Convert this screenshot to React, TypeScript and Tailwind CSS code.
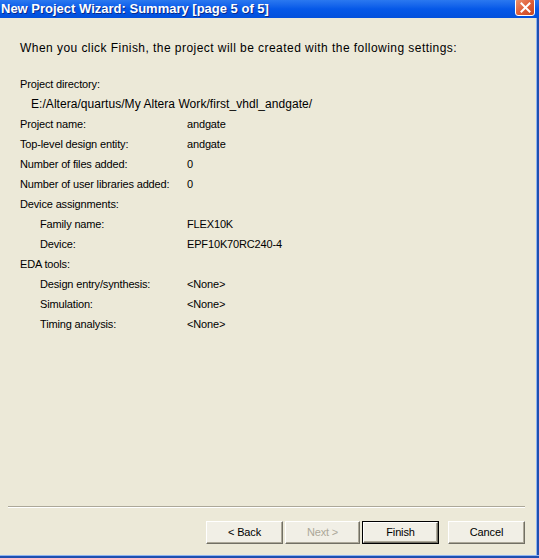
import React from "react"

const rows: { label: string; value?: string; indent?: "dir" | "sub" }[] = [
  { label: "Project directory:" },
  { label: "E:/Altera/quartus/My Altera Work/first_vhdl_andgate/", indent: "dir" },
  { label: "Project name:", value: "andgate" },
  { label: "Top-level design entity:", value: "andgate" },
  { label: "Number of files added:", value: "0" },
  { label: "Number of user libraries added:", value: "0" },
  { label: "Device assignments:" },
  { label: "Family name:", value: "FLEX10K", indent: "sub" },
  { label: "Device:", value: "EPF10K70RC240-4", indent: "sub" },
  { label: "EDA tools:" },
  { label: "Design entry/synthesis:", value: "<None>", indent: "sub" },
  { label: "Simulation:", value: "<None>", indent: "sub" },
  { label: "Timing analysis:", value: "<None>", indent: "sub" },
]

export default function App() {
  return (
    <div
      className="w-[539px] h-[558px] flex flex-col bg-[#0a3fb8] overflow-hidden"
      style={{ fontFamily: '"Liberation Sans", Arial, sans-serif' }}
    >

      {/* title bar */}
      <div className="h-[18px] flex items-center bg-gradient-to-b from-[#2a78f0] via-[#0558e8] to-[#0250dc] relative">
        <span className="pl-[1px] text-white font-bold text-[13px] leading-[18px] [text-shadow:1px_1px_0_#0a2a8a]">
          New Project Wizard: Summary [page 5 of 5]
        </span>

        <div className="absolute left-[515px] top-[-2px] w-[20px] h-[18px] rounded-[3px] border border-white bg-gradient-to-br from-[#eb9470] via-[#e0603a] to-[#c8461f] flex items-center justify-center">
          <svg width="11" height="11" viewBox="0 0 11 11">
            <path d="M1.5 1.5 L9.5 9.5 M9.5 1.5 L1.5 9.5" stroke="white" strokeWidth="2" strokeLinecap="square" />
          </svg>
        </div>
      </div>

      <div className="flex-1 flex">

        <div className="flex-1 flex flex-col bg-[#ece9d8] text-black text-[11px] tracking-[-0.15px]">

          <div className="flex-1 pt-[20px] pl-[20px]">

            <p className="leading-[20px] mb-[16px] text-[12px] tracking-[0.45px] whitespace-nowrap">
              When you click Finish, the project will be created with the following settings:
            </p>

            {rows.map((row, index) => (
              <div key={index} className="flex h-[20px] items-center">
                <div
                  className={`w-[167px] shrink-0 whitespace-nowrap ${
                    row.indent === "dir"
                      ? "pl-[11px] text-[12px] tracking-[0.05px]"
                      : row.indent === "sub"
                      ? "pl-[20px]"
                      : ""
                  }`}
                >
                  {row.label}
                </div>

                {row.value && <div>{row.value}</div>}
              </div>
            ))}

          </div>

          <div className="ml-[8px] mr-[11px] h-[2px] border-t border-[#aca899] border-b border-b-white" />

          <div className="flex pt-[13px] pb-[11px] pr-[11px] justify-end">

            <XpButton label="< Back" className="w-[77px] mr-[2px]" />

            <XpButton label="Next >" className="w-[75px] mr-[2px]" disabled />

            <XpButton label="Finish" className="w-[77px] mr-[9px]" primary />

            <XpButton label="Cancel" className="w-[77px]" />

          </div>

        </div>

        <div className="w-[3px] border-l border-[#8fb4f0] bg-[#1f4fb0]" />

      </div>

      <div className="h-[3px] border-t border-[#8fb4f0] bg-[#1f4fb0]" />

    </div>
  )
}

function XpButton({
  label,
  className,
  disabled,
  primary
}: any) {
  return (
    <div
      className={`h-[23px] ${className} ${
        primary ? "border border-black" : ""
      }`}
    >
      <div className="h-full w-full bg-[#f1efe6] border-t border-l border-t-white border-l-white border-b border-r border-b-[#716f64] border-r-[#716f64] shadow-[inset_-1px_-1px_0_#aca899] flex items-center justify-center">
        <span className={disabled ? "text-[#aca899]" : "text-black"}>
          {label}
        </span>
      </div>
    </div>
  )
}
